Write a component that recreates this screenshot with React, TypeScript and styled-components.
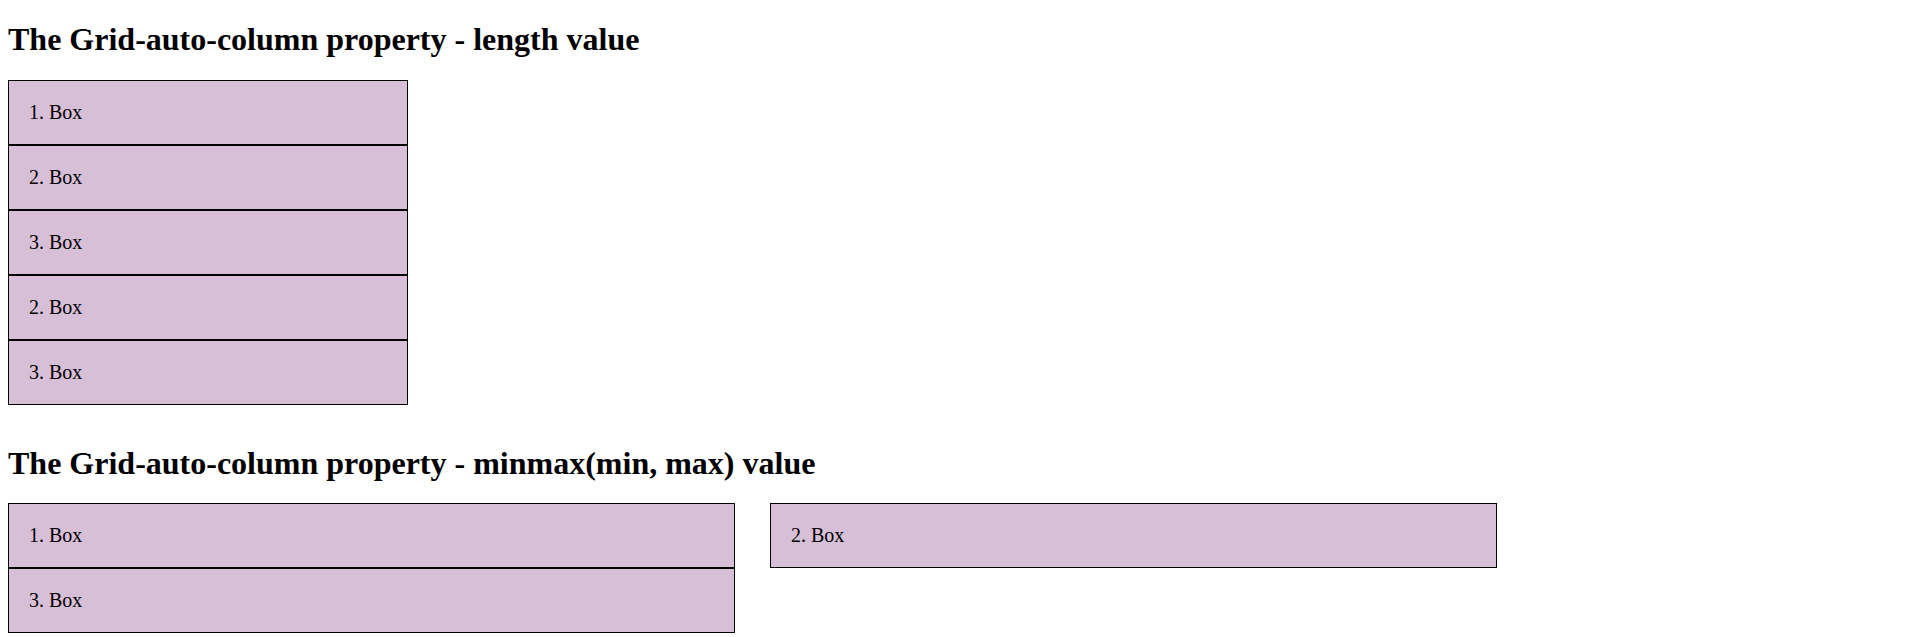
import styled, { createGlobalStyle } from 'styled-components';

const GlobalStyle = createGlobalStyle`
  body {
    margin: 0 8px;
    font-family: "Liberation Serif", "Times New Roman", serif;
    color: #000;
    background: #fff;
  }
`;

const lengthBoxes = ['1. Box', '2. Box', '3. Box', '2. Box', '3. Box'];
const minmaxBoxes = ['1. Box', '2. Box', '3. Box'];

const App = () => {
  return (
    <>
      <GlobalStyle />
      <Title>The Grid-auto-column property - length value</Title>
      <LengthGrid>
        {lengthBoxes.map((label, i) => (
          <Box key={i}>{label}</Box>
        ))}
      </LengthGrid>
      <Title>The Grid-auto-column property - minmax(min, max) value</Title>
      <MinmaxGrid>
        {minmaxBoxes.map((label, i) => (
          <Box key={i}>{label}</Box>
        ))}
      </MinmaxGrid>
    </>
  );
};

export default App;

const Title = styled.h1`
  font-size: 32px;
  font-weight: bold;
  margin: 21.44px 0;
`;

const LengthGrid = styled.div`
  display: grid;
  grid-template-columns: 400px;
  margin-bottom: 40px;
`;

const MinmaxGrid = styled.div`
  display: grid;
  grid-template-columns: repeat(2, 727px);
  column-gap: 35px;
  margin-bottom: 40px;
`;

const Box = styled.div`
  box-sizing: border-box;
  background: #d8bfd8;
  border: 1px solid #000;
  padding: 20px;
  font-size: 20px;
  line-height: 23px;
`;
